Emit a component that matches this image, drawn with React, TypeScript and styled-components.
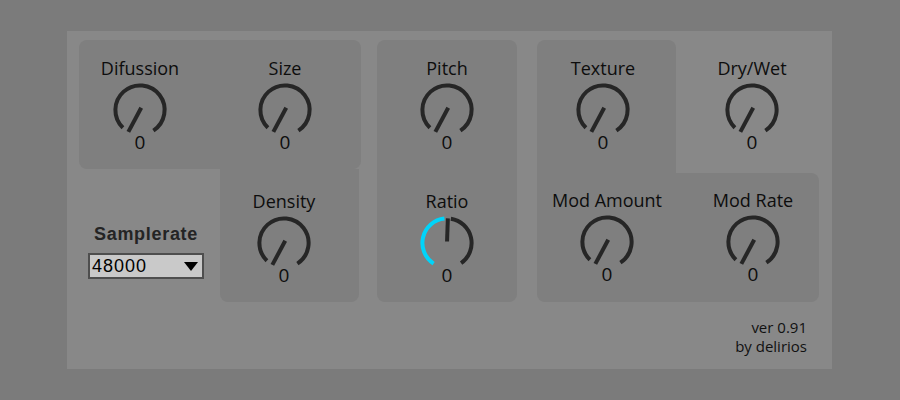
import React from "react";
import styled, { createGlobalStyle } from "styled-components";

const Global = createGlobalStyle`
  html, body { margin: 0; padding: 0; background: #7b7b7b; }
  body { font-family: "Open Sans", "DejaVu Sans", sans-serif; color: #111; }
`;

const Page = styled.div`
  width: 900px;
  height: 400px;
  box-sizing: border-box;
  padding: 31px 0 0 67px;
`;

const Panel = styled.div`
  width: 765px;
  height: 338px;
  box-sizing: border-box;
  background: #888888;
  padding: 9px 13px 0 12px;
  display: flex;
  flex-direction: column;
`;

const Main = styled.div`
  display: flex;
  align-items: flex-start;
`;

const Group = styled.div<{ $w: number; $ml?: number }>`
  width: ${(p) => p.$w}px;
  margin-left: ${(p) => p.$ml ?? 0}px;
  display: flex;
  flex-direction: column;
`;

const Row = styled.div`
  display: flex;
  align-items: flex-start;
`;

const Box = styled.div<{
  $w: number;
  $h: number;
  $pad: string;
  $radius: string;
  $gap?: number;
  $column?: boolean;
}>`
  width: ${(p) => p.$w}px;
  height: ${(p) => p.$h}px;
  box-sizing: border-box;
  padding: ${(p) => p.$pad};
  border-radius: ${(p) => p.$radius};
  background: #7f7f7f;
  display: flex;
  flex-direction: ${(p) => (p.$column ? "column" : "row")};
  gap: ${(p) => p.$gap ?? 0}px;
`;

const Free = styled.div<{ $pad: string }>`
  padding: ${(p) => p.$pad};
`;

const Cell = styled.div`
  width: 120px;
  display: flex;
  flex-direction: column;
  align-items: center;
`;

const Label = styled.div`
  font-size: 18px;
  font-weight: 500;
  line-height: 22px;
  white-space: nowrap;
  color: #0d0d0d;
`;

const Value = styled.div`
  font-size: 19px;
  font-weight: 500;
  line-height: 22px;
  margin-top: -3px;
  color: #0d0d0d;
`;

const KnobSvg = styled.svg`
  display: block;
  margin-top: 1px;
`;

const SampleArea = styled.div`
  width: 141px;
  box-sizing: border-box;
  padding: 54px 7px 0 0;
  display: flex;
  flex-direction: column;
  align-items: center;
`;

const SampleLabel = styled.div`
  font-family: "Liberation Sans", Arial, sans-serif;
  font-weight: bold;
  font-size: 18px;
  line-height: 22px;
  letter-spacing: 0.7px;
  color: #242424;
  margin-bottom: 8px;
`;

const Select = styled.div`
  width: 116px;
  height: 26px;
  box-sizing: border-box;
  border: 2px solid #4e4e4e;
  background: #c9c9c9;
  display: flex;
  align-items: center;
  justify-content: space-between;
  padding: 0 4px 0 2px;
  font-family: "Liberation Sans", Arial, sans-serif;
  font-size: 18px;
  letter-spacing: 1px;
  color: #000;
`;

const Footer = styled.div`
  align-self: flex-end;
  margin: 16px 12px 0 0;
  text-align: right;
  font-size: 15px;
  font-weight: 500;
  line-height: 19px;
  color: #111;
`;

const R = 24.6;
const C = 30;
const pt = (a: number, r: number) => {
  const rad = (a * Math.PI) / 180;
  return [C + r * Math.sin(rad), C - r * Math.cos(rad)];
};
const arc = (a1: number, a2: number) => {
  const [x1, y1] = pt(a1, R);
  const [x2, y2] = pt(a2, R);
  const large = a2 - a1 > 180 ? 1 : 0;
  return `M ${x1.toFixed(2)} ${y1.toFixed(2)} A ${R} ${R} 0 ${large} 1 ${x2.toFixed(2)} ${y2.toFixed(2)}`;
};

const Knob: React.FC<{ bipolar?: boolean }> = ({ bipolar }) => {
  const dark = "#262626";
  const sw = 4;
  if (bipolar) {
    const [nx1, ny1] = pt(2, 1.5);
    const [nx2, ny2] = pt(2, 24.6);
    return (
      <KnobSvg width={60} height={54} viewBox="0 0 60 54">
        <path d={arc(-147, -6)} stroke="#00d4fa" strokeWidth={sw} fill="none" />
        <path d={arc(9, 145)} stroke={dark} strokeWidth={sw} fill="none" />
        <line x1={nx1} y1={ny1} x2={nx2} y2={ny2} stroke={dark} strokeWidth={sw} />
      </KnobSvg>
    );
  }
  const [nx1, ny1] = pt(28, 2.6);
  const [nx2, ny2] = pt(-152, 24.8);
  return (
    <KnobSvg width={60} height={54} viewBox="0 0 60 54">
      <path d={arc(-136, 147)} stroke={dark} strokeWidth={sw} fill="none" />
      <line x1={nx1} y1={ny1} x2={nx2} y2={ny2} stroke={dark} strokeWidth={sw} />
    </KnobSvg>
  );
};

const Dial: React.FC<{ label: string; bipolar?: boolean }> = ({ label, bipolar }) => (
  <Cell>
    <Label>{label}</Label>
    <Knob bipolar={bipolar} />
    <Value>0</Value>
  </Cell>
);

export default function App() {
  return (
    <>
      <Global />
      <Page>
        <Panel>
          <Main>
            <Group $w={282}>
              <Box $w={282} $h={129} $pad="17px 0 0 1px" $radius="8px" $gap={25}>
                <Dial label="Difussion" />
                <Dial label="Size" />
              </Box>
              <Row>
                <SampleArea>
                  <SampleLabel>Samplerate</SampleLabel>
                  <Select>
                    <span>48000</span>
                    <svg width="14" height="9" viewBox="0 0 14 9">
                      <polygon points="0,0 14,0 7,9" fill="#000" />
                    </svg>
                  </Select>
                </SampleArea>
                <Box $w={139} $h={133} $pad="21px 0 0 4px" $radius="0 0 8px 8px">
                  <Dial label="Density" />
                </Box>
              </Row>
            </Group>
            <Group $w={140} $ml={16}>
              <Box $w={140} $h={262} $pad="17px 10px 0 10px" $radius="8px" $gap={37} $column>
                <Dial label="Pitch" />
                <Dial label="Ratio" bipolar />
              </Box>
            </Group>
            <Group $w={282} $ml={20}>
              <Row>
                <Box $w={139} $h={133} $pad="17px 0 0 6px" $radius="8px 8px 0 0">
                  <Dial label="Texture" />
                </Box>
                <Free $pad="17px 0 0 16px">
                  <Dial label="Dry/Wet" />
                </Free>
              </Row>
              <Box $w={282} $h={129} $pad="16px 0 0 10px" $radius="0 8px 8px 8px" $gap={26}>
                <Dial label="Mod Amount" />
                <Dial label="Mod Rate" />
              </Box>
            </Group>
          </Main>
          <Footer>
            ver 0.91
            <br />
            by delirios
          </Footer>
        </Panel>
      </Page>
    </>
  );
}
